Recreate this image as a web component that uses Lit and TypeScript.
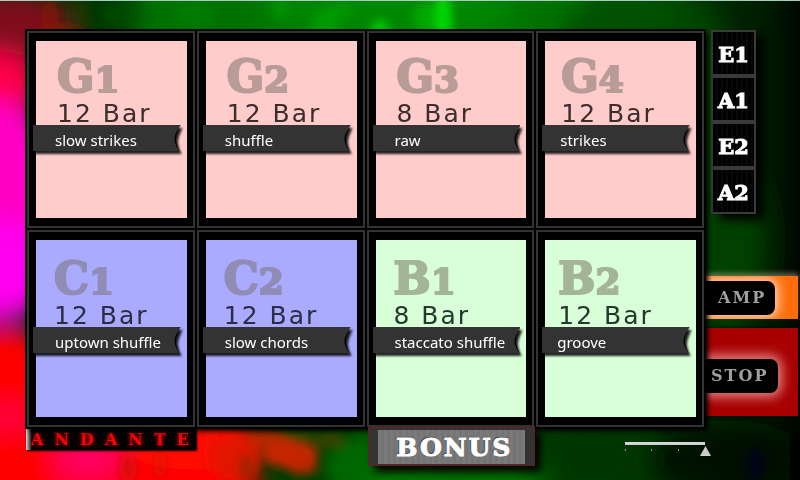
import { LitElement, html, css, svg } from "lit";
import { customElement, property } from "lit/decorators.js";
import { classMap } from "lit/directives/class-map.js";

type Tone = "rose" | "iris" | "mint";

interface Pattern {
  key: string;
  take: string;
  bars: string;
  feel: string;
  tone: Tone;
}

const PATTERNS: Pattern[][] = [
  [
    { key: "G", take: "1", bars: "12 Bar", feel: "slow strikes", tone: "rose" },
    { key: "G", take: "2", bars: "12 Bar", feel: "shuffle", tone: "rose" },
    { key: "G", take: "3", bars: "8 Bar", feel: "raw", tone: "rose" },
    { key: "G", take: "4", bars: "12 Bar", feel: "strikes", tone: "rose" },
  ],
  [
    { key: "C", take: "1", bars: "12 Bar", feel: "uptown shuffle", tone: "iris" },
    { key: "C", take: "2", bars: "12 Bar", feel: "slow chords", tone: "iris" },
    { key: "B", take: "1", bars: "8 Bar", feel: "staccato shuffle", tone: "mint" },
    { key: "B", take: "2", bars: "12 Bar", feel: "groove", tone: "mint" },
  ],
];

const BANKS = ["E1", "A1", "E2", "A2"];

type Cloud = [number, number, number, number, string, number];

// Broad colour washes of the backdrop: centre, radii, fill, opacity.
const WASHES: Cloud[] = [
  [380, 10, 300, 60, "#007800", 0.9],
  [390, 10, 130, 30, "#009000", 0.7],
  [110, 10, 30, 40, "#003400", 0.9],
  [640, 120, 100, 150, "#004a00", 0.8],
  [725, 240, 40, 90, "#004400", 0.9],
  [5, 24, 66, 34, "#80101c", 1],
  [0, 84, 40, 34, "#ff0048", 1],
  [0, 190, 60, 90, "#ff00c4", 1],
  [0, 270, 50, 50, "#ff00f0", 1],
  [0, 385, 60, 60, "#ff0000", 1],
  [10, 425, 30, 22, "#ff0048", 0.9],
  [90, 490, 170, 70, "#ff0000", 1],
  [88, 458, 34, 22, "#ff0078", 0.8],
  [190, 440, 70, 30, "#ff0800", 1],
  [380, 470, 50, 40, "#006800", 1],
  [460, 478, 110, 30, "#007400", 0.9],
  [590, 460, 60, 40, "#003400", 0.9],
  [730, 460, 80, 40, "#000c00", 0.9],
];

// Smaller streaks that sit on top of the washes.
const STREAKS: Cloud[] = [
  [443, 18, 9, 26, "#00e000", 0.9],
  [425, 16, 12, 14, "#00b800", 0.7],
  [380, 32, 9, 14, "#00d800", 0.8],
  [325, 24, 14, 14, "#00a800", 0.6],
  [340, 10, 14, 6, "#00a800", 0.6],
  [280, 8, 8, 8, "#00a000", 0.6],
  [195, 14, 20, 12, "#008400", 0.6],
  [118, 14, 16, 10, "#005800", 0.5],
  [60, 34, 24, 9, "#8c2000", 0.8],
  [50, 14, 8, 14, "#8c1408", 0.6],
  [128, 468, 8, 14, "#c81400", 0.7],
  [160, 466, 6, 14, "#d01800", 0.6],
  [212, 450, 8, 24, "#f01000", 0.7],
  [236, 460, 24, 24, "#e01400", 0.9],
  [246, 468, 8, 14, "#8c2800", 0.7],
  [290, 454, 28, 14, "#d82400", 0.9],
  [270, 440, 22, 10, "#d02400", 0.8],
  [302, 466, 16, 9, "#c82400", 0.8],
  [330, 440, 16, 8, "#504000", 0.7],
  [300, 434, 18, 5, "#204800", 0.8],
  [350, 466, 20, 20, "#006800", 0.8],
  [755, 465, 9, 18, "#000018", 0.8],
];

@customElement("pattern-card")
export class PatternCard extends LitElement {
  @property({ attribute: false }) pattern!: Pattern;
  @property({ type: Boolean }) low = false;
  @property({ type: Boolean }) last = false;

  static styles = css`
    :host {
      display: flex;
      border: 1px solid #000;
      min-width: 0;
    }
    .card {
      flex: 1;
      display: flex;
      min-width: 0;
      margin: 0;
      padding: 8px 6px 8px 7px;
      border: 2px solid #333;
      background: #000;
      text-align: left;
      cursor: pointer;
    }
    .face {
      flex: 1;
      min-width: 0;
      min-height: 177px;
      box-sizing: border-box;
      padding-top: 12px;
      --indent: 21px;
      --feel-indent: 22px;
    }
    .low {
      padding-top: 15px;
      --indent: 18px;
    }
    .last {
      --indent: 16px;
      --feel-indent: 18px;
    }
    .low.last {
      --indent: 13px;
      --feel-indent: 15px;
    }
    .rose {
      background: #fcc;
      --mark: #b89c98;
      --bars: #3d2c2c;
    }
    .iris {
      background: #aaf;
      --mark: #908cb4;
      --bars: #2c2c44;
    }
    .mint {
      background: #d9ffd9;
      --mark: #a4b498;
      --bars: #24382c;
    }
    .mark {
      display: block;
      height: 48px;
      line-height: 48px;
      padding-left: var(--indent);
      font-family: "DejaVu Serif", serif;
      font-weight: 700;
      font-size: 44px;
      color: var(--mark);
      -webkit-text-stroke: 2px var(--mark);
      text-shadow: -1px -1px 0 rgba(60, 40, 40, 0.25);
    }
    .take {
      font-size: 36px;
    }
    .bars {
      display: block;
      height: 24px;
      line-height: 26px;
      padding-left: var(--indent);
      font-family: "DejaVu Sans", sans-serif;
      font-size: 25px;
      letter-spacing: 2px;
      white-space: nowrap;
      color: var(--bars);
    }
    .ribbon {
      display: grid;
      align-items: center;
      height: 26px;
      margin: 0 6px 0 -3px;
      filter: drop-shadow(2px 3px 1px rgba(0, 0, 0, 0.85));
    }
    .tape,
    .feel {
      grid-area: 1 / 1;
    }
    .tape {
      width: 100%;
      height: 26px;
      display: block;
    }
    .feel {
      padding-left: var(--feel-indent);
      padding-top: 4px;
      font-family: "Noto Sans", sans-serif;
      font-size: 15px;
      line-height: 20px;
      white-space: nowrap;
      color: #fff;
    }
  `;

  render() {
    const p = this.pattern;
    const face = { face: true, [p.tone]: true, low: this.low, last: this.last };
    return html`
      <button class="card" type="button">
        <span class=${classMap(face)}>
          <span class="mark">${p.key}<span class="take">${p.take}</span></span>
          <span class="bars">${p.bars}</span>
          <span class="ribbon">
            <svg class="tape" viewBox="0 0 148 26" preserveAspectRatio="none" aria-hidden="true">
              <path d="M0 0H148Q139 13 147 26H0Z" fill="#333" />
              <path d="M148 2Q139 13 147 26Q136 13 148 2Z" fill="#000" />
            </svg>
            <span class="feel">${p.feel}</span>
          </span>
        </span>
      </button>
    `;
  }
}

@customElement("app-root")
export class AppRoot extends LitElement {
  static styles = css`
    :host {
      display: block;
    }
    .page {
      position: relative;
      isolation: isolate;
      min-height: 100vh;
      box-sizing: border-box;
      padding-top: 30px;
      overflow: hidden;
      background: #001400;
      font-family: "DejaVu Serif", serif;
    }
    .backdrop {
      position: absolute;
      inset: 0;
      width: 100%;
      height: 100%;
      z-index: -1;
      box-sizing: border-box;
      border-top: 1px solid #a8ccc0;
    }
    .stage {
      display: flex;
      padding-left: 26px;
    }
    .board {
      flex: 1;
      min-width: 0;
      display: grid;
      grid-template-columns: repeat(4, minmax(0, 1fr));
      z-index: 1;
      box-shadow: 0 0 0 1px #000, 3px 3px 5px #000;
    }
    .side {
      flex: none;
      width: 95px;
      display: flex;
      flex-direction: column;
    }
    .banks {
      display: flex;
      flex-direction: column;
      width: 45px;
      margin: 0 0 62px 6px;
      box-shadow: 8px 6px 10px #000;
    }
    button {
      margin: 0;
      padding: 0;
      cursor: pointer;
      font-family: "DejaVu Serif", serif;
      font-weight: 700;
    }
    .bank {
      height: 46px;
      padding-top: 2px;
      border: 2px solid #3a3a3a;
      background: repeating-linear-gradient(90deg, #000 0 3px, #080808 3px 5px);
      color: #fff;
      font-size: 21px;
      -webkit-text-stroke: 1px #fff;
    }
    .action {
      display: flex;
      align-items: center;
      margin-right: 2px;
      border: 0;
      overflow: hidden;
      text-align: left;
    }
    .amp {
      height: 43px;
      margin-bottom: 9px;
      background: #ff6c08;
      box-shadow: 0 -3px 5px rgba(190, 170, 150, 0.5);
    }
    .stop {
      height: 88px;
      padding-top: 7px;
      background: #a80000;
      box-shadow: 0 0 3px #000;
    }
    .pill {
      box-sizing: border-box;
      height: 34px;
      line-height: 34px;
      border-radius: 0 8px 8px 0;
      background: #000;
      color: #a0a0a0;
      font-size: 16px;
      letter-spacing: 2px;
    }
    .amp .pill {
      width: 70px;
      padding-left: 13px;
      box-shadow: 0 0 12px 3px rgba(255, 255, 255, 0.75);
    }
    .stop .pill {
      width: 73px;
      padding-left: 6px;
      box-shadow: 0 0 12px 4px rgba(255, 190, 190, 0.7);
    }
    .dock {
      display: grid;
      grid-template-columns: repeat(4, minmax(0, 1fr));
      align-items: start;
      padding: 0 95px 0 26px;
    }
    .tempo {
      grid-column: 1;
      box-sizing: border-box;
      height: 22px;
      padding-left: 5px;
      border: 0;
      background: linear-gradient(90deg, #ddd 0, #000 6px);
      box-shadow: 1px 1px 2px #000;
      line-height: 24px;
      font-size: 16px;
      text-align: left;
      color: #f00;
      text-shadow: 0 0 5px #f00;
      letter-spacing: 11px;
      white-space: nowrap;
    }
    .bonus {
      position: relative;
      z-index: 2;
      grid-column: 3;
      height: 40px;
      margin: -2px 0 0 2px;
      padding: 3px 9px 1px;
      border: 1px solid #6a1c1c;
      background: #333;
      box-shadow: 6px 6px 8px #000;
    }
    .plate {
      display: block;
      height: 34px;
      line-height: 36px;
      padding-left: 6px;
      text-align: center;
      background: repeating-linear-gradient(90deg, #7a7a7a 0 3px, #747474 3px 6px);
      color: #fff;
      font-size: 25px;
      letter-spacing: 2px;
      -webkit-text-stroke: 1px #fff;
      text-shadow: -1px -1px 1px #333;
    }
    .level {
      grid-column: 4;
      justify-self: end;
      appearance: none;
      -webkit-appearance: none;
      width: 92px;
      height: 14px;
      margin: 14px -6px 0 0;
      background:
        linear-gradient(#ddd, #ccc) 6px 0 / 80px 3px no-repeat,
        linear-gradient(#898, #898) 6px 7px / 1px 2px no-repeat,
        linear-gradient(#898, #898) 32px 7px / 1px 2px no-repeat,
        linear-gradient(#898, #898) 59px 7px / 1px 2px no-repeat;
    }
    .level::-webkit-slider-runnable-track {
      height: 14px;
      background: none;
    }
    .level::-webkit-slider-thumb {
      appearance: none;
      -webkit-appearance: none;
      width: 11px;
      height: 10px;
      margin-top: 4px;
      background: #ccc;
      clip-path: polygon(50% 0, 100% 100%, 0 100%);
    }
  `;

  private clouds(list: Cloud[]) {
    return list.map(
      ([cx, cy, rx, ry, fill, o]) =>
        svg`<ellipse cx=${cx} cy=${cy} rx=${rx} ry=${ry} fill=${fill} opacity=${o} />`
    );
  }

  private backdrop() {
    return html`
      <svg class="backdrop" viewBox="0 0 800 480" preserveAspectRatio="none" aria-hidden="true">
        <defs>
          <filter id="broad" x="-20%" y="-20%" width="140%" height="140%">
            <feGaussianBlur stdDeviation="12" />
          </filter>
          <filter id="fine" x="-20%" y="-20%" width="140%" height="140%">
            <feGaussianBlur stdDeviation="5" />
          </filter>
          <linearGradient id="dusk" x1="0" x2="1">
            <stop offset="0" stop-color="#003000" />
            <stop offset="0.6" stop-color="#004800" />
            <stop offset="0.88" stop-color="#003000" />
            <stop offset="1" stop-color="#001000" />
          </linearGradient>
        </defs>
        <rect width="800" height="480" fill="url(#dusk)" />
        <g filter="url(#broad)">
          ${this.clouds(WASHES)}
          <rect x="790" y="-20" width="50" height="520" fill="#000" opacity="0.6" />
        </g>
        <g filter="url(#fine)">${this.clouds(STREAKS)}</g>
      </svg>
    `;
  }

  render() {
    return html`
      <main class="page">
        ${this.backdrop()}
        <div class="stage">
          <section class="board" aria-label="Patterns">
            ${PATTERNS.map((row, r) =>
              row.map(
                (p, c) => html`<pattern-card
                  .pattern=${p}
                  .low=${r === 1}
                  .last=${c === row.length - 1}
                ></pattern-card>`
              )
            )}
          </section>
          <aside class="side">
            <nav class="banks" aria-label="Banks">
              ${BANKS.map((b) => html`<button class="bank" type="button">${b}</button>`)}
            </nav>
            <button class="action amp" type="button"><span class="pill">AMP</span></button>
            <button class="action stop" type="button"><span class="pill">STOP</span></button>
          </aside>
        </div>
        <footer class="dock">
          <button class="tempo" type="button">ANDANTE</button>
          <button class="bonus" type="button"><span class="plate">BONUS</span></button>
          <input class="level" type="range" min="0" max="3" value="3" aria-label="Level" />
        </footer>
      </main>
    `;
  }
}
